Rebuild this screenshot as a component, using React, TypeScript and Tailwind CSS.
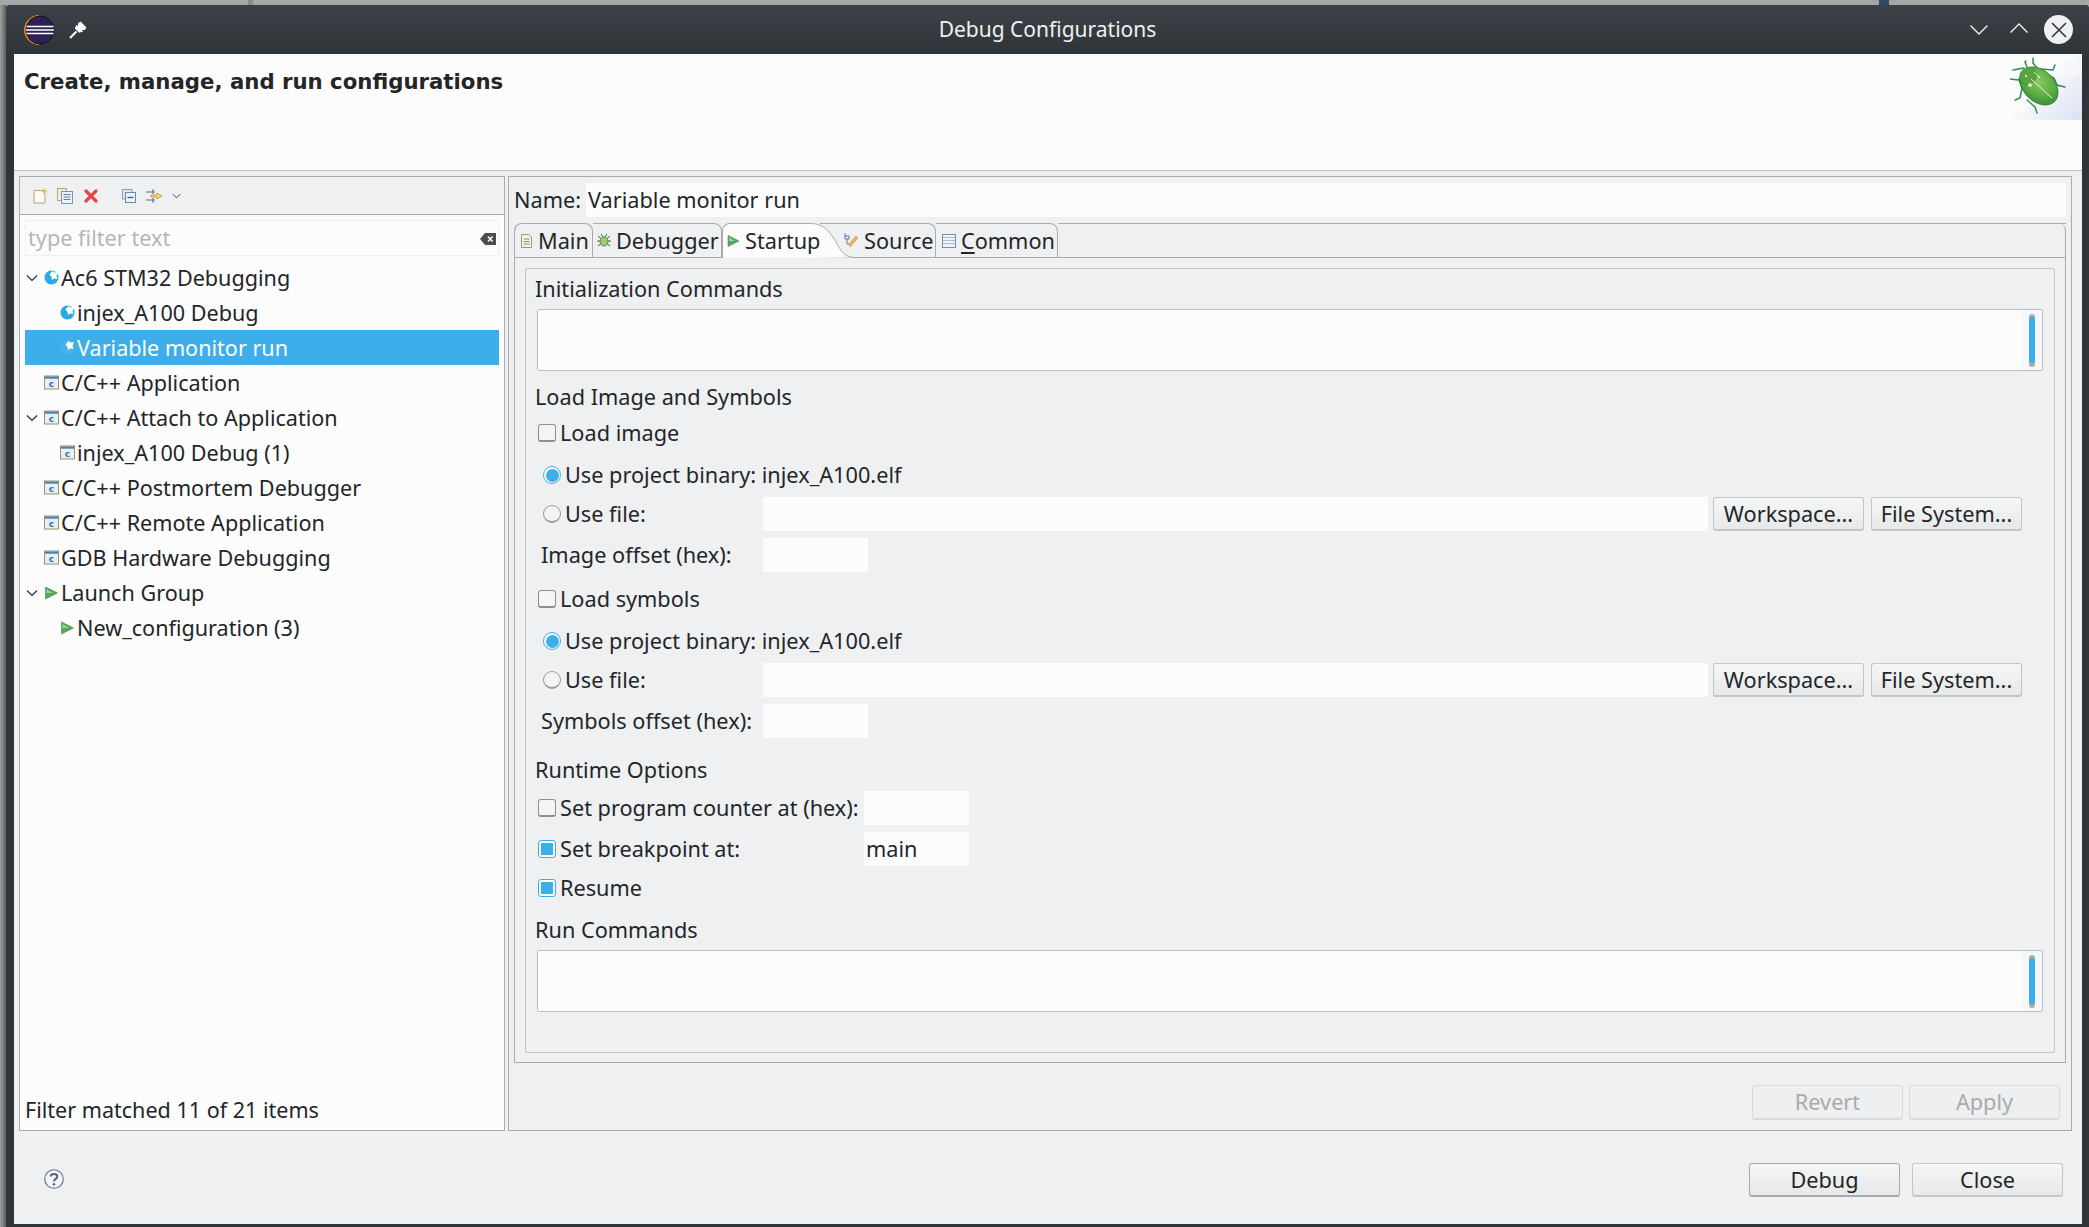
import React from "react";

const Chevron = ({ cls = "w-[12px] h-[8px]" }: { cls?: string }) => (
  <svg viewBox="0 0 12 8" className={cls}><path d="M1 1.5 L6 6.5 L11 1.5" fill="none" stroke="#232629" strokeWidth="1.1" /></svg>
);
const Blue = ({ sel = false }: { sel?: boolean }) => (
  <svg viewBox="0 0 15 15" className="w-[15px] h-[15px] shrink-0">
    <circle cx="7.5" cy="7.5" r="7" fill={sel ? "#46b4ec" : "#29abe2"} />
    <path d="M5.5 4.5 L8.5 1 L10.5 2.5 L14 2 L12.5 6 L13.5 9 L10 8.5 L8 10 L7.5 7 Z" fill="#fff" />
  </svg>
);
const CApp = () => (
  <svg viewBox="0 0 15 15" className="w-[15px] h-[15px] shrink-0">
    <rect x="0.5" y="1" width="14" height="13" fill="#e6f0f8" stroke="#9c9460" />
    <rect x="1" y="1.5" width="13" height="2.2" fill="#4a7fb5" />
    <text x="7.5" y="11.8" textAnchor="middle" fontSize="9" fontWeight="700" fontFamily="DejaVu Sans" fill="#3a6ea5">c</text>
  </svg>
);
const Play = ({ cls = "w-[13px] h-[13px]" }: { cls?: string }) => (
  <svg viewBox="0 0 13 13" className={cls + " shrink-0"}>
    <path d="M1 1 L12 6.5 L1 12 Z" fill="#55a85f" stroke="#3f8f4a" strokeWidth="0.6" />
    <path d="M2 3 L8 6.5 L2 6.5 Z" fill="#9ed4a0" />
  </svg>
);

const Row = ({ level, exp, icon, text, sel }: { level: number; exp?: boolean; icon: React.ReactNode; text: string; sel?: boolean }) => (
  <div className={"h-[35px] flex items-center text-[21.6px] " + (sel ? "bg-[#3daee9] text-[#fcfcfc]" : "")}>
    <div className={level ? "w-[35px] shrink-0" : "w-[19px] shrink-0"}>
      {exp ? <Chevron cls="ml-[1px] w-[12px] h-[8px]" /> : null}
    </div>
    {icon}
    <span className="ml-[2px] leading-none">{text}</span>
  </div>
);

const Btn = ({ t, w = "w-[151px]", h = "h-[34px]", dis, def }: { t: string; w?: string; h?: string; dis?: boolean; def?: boolean }) => (
  <div
    className={
      w + " " + h + " flex items-center justify-center rounded-[3px] border " +
      (dis
        ? "border-[#d9dadb] text-[#a8aaac] bg-[#eeeff0] border-b-[2px]"
        : def
        ? "pt-[1px] border-[#a7a9ab] border-b-[2px] bg-linear-to-b from-[#f5f6f6] to-[#e7e8e9]"
        : "pt-[1px] border-[#c3c5c6] border-b-[2px] bg-linear-to-b from-[#f5f6f6] to-[#e7e8e9]")
    }
  >
    {t}
  </div>
);

const Box = ({ on }: { on?: boolean }) => (
  <div className={"w-[18px] h-[18px] ml-[12px] mr-[4px] rounded-[3px] border shrink-0 flex items-center justify-center " + (on ? "border-[#3daee9] bg-[#fcfcfc]" : "border-[#8d8f91] border-b-[2px] bg-[#f3f4f4]")}>
    {on ? <div className="w-[12px] h-[12px] bg-[#3daee9]" /> : null}
  </div>
);
const Radio = ({ on }: { on?: boolean }) => (
  <div className={"w-[18px] h-[18px] ml-[17px] mr-[4px] rounded-full border shrink-0 flex items-center justify-center " + (on ? "border-[#3daee9] bg-[#fcfcfc]" : "border-[#9a9c9e] border-b-[2px] bg-[#f3f4f4]")}>
    {on ? <div className="w-[13px] h-[13px] rounded-full bg-[#3daee9]" /> : null}
  </div>
);
const Field = ({ w, t }: { w: string; t?: string }) => (
  <div className={w + " h-[34px] bg-[#fcfcfc] flex items-center pl-[2px] shrink-0"}>{t}</div>
);
const Area = ({ mt }: { mt: string }) => (
  <div className={mt + " ml-[11px] w-[1506px] h-[62px] border border-[#bcbec0] rounded-[2px] bg-[#fcfcfc] flex justify-end"}>
    <div className="w-[20px] bg-[#f6f7f7] rounded-r-[2px] flex items-center pl-[7px]">
      <div className="w-[6px] h-[53px] rounded-full bg-[#a9abad] flex items-center">
        <div className="w-[6px] h-[46px] rounded-full bg-[#3daee9]" />
      </div>
    </div>
  </div>
);
const L = ({ mt, children }: { mt: string; children: React.ReactNode }) => (
  <div className={mt + " h-[34px] flex items-center"}>{children}</div>
);

const Tab = ({ w, icon, t, gap }: { w: string; icon: React.ReactNode; t: React.ReactNode; gap: string }) => (
  <div className={w + " h-[34px] flex items-center justify-start border-t border-r border-[#a9abad] rounded-tr-[8px] shrink-0"}>
    <span className={gap + " flex items-center"}>{icon}</span>
    <span className="pt-[2px]">{t}</span>
  </div>
);

export default function App() {
  return (
    <div className="w-[2089px] h-[1227px] overflow-hidden bg-[#a6a6a6] font-['Noto_Sans',sans-serif] text-[21.7px] text-[#232629]">
      <div className="h-[5px] overflow-hidden flex text-[#333]">
        <div className="w-[248px] h-[5px]" />
        <div className="w-[5px] h-[5px] bg-[#8c8c8c]" />
        <div className="w-[15px]" />
        <div className="-mt-[22px] leading-[28px]">100</div>
        <div className="w-[120px]" />
        <div className="-mt-[22px] leading-[28px]">data read</div>
        <div className="flex-1" />
        <div className="w-[10px] h-[5px] mr-[26px] bg-[#2f4b66]" />
        <div className="-mt-[22px] leading-[28px] mr-[88px]">events.u</div>
      </div>
      <div className="h-[1222px] flex">
        <div className="w-[6px] shrink-0 bg-linear-to-r from-[#a0a0a0] to-[#5f5f5f]" />
        <div className="flex-1 flex flex-col bg-[#2f3438] rounded-t-[4px] pb-[3px] min-w-0">
          {/* title bar */}
          <div className="h-[49px] shrink-0 grid grid-cols-[1fr_auto_1fr] items-center rounded-t-[4px] bg-linear-to-b from-[#3d4249] to-[#2f3438]">
            <div className="flex items-center pl-[16px]">
              <svg viewBox="0 0 34 32" className="w-[34px] h-[32px]">
                <path d="M17 1.5 A14.5 14.5 0 0 0 17 30.5 A16 15 0 0 1 17 1.5 Z" fill="#f28c1e" stroke="#f28c1e" />
                <circle cx="18" cy="16" r="14" fill="#2c2255" stroke="#15121f" />
                <path d="M4.5 12.5 H31.5 M4 16 H32 M4.5 19.5 H31.5" stroke="#fff" strokeWidth="1.7" />
              </svg>
              <svg viewBox="0 0 18 18" className="ml-[13px] w-[19px] h-[19px]">
                <path d="M8.5 3 L11 1.5 L16.5 7 L15 9.5 L11.5 9.5 L8.5 6.5 Z" fill="#fcfcfc" />
                <path d="M7 4.5 L13.5 11 L9.5 12 L5.5 8 Z" fill="#fcfcfc" />
                <path d="M7 11 L1 17" stroke="#fcfcfc" strokeWidth="2" />
              </svg>
            </div>
            <div className="text-[21px] text-[#eff0f1]">Debug Configurations</div>
            <div className="flex items-center justify-end pr-[16px]">
              <svg viewBox="0 0 20 12" className="w-[20px] h-[12px]"><path d="M1.5 1.5 L10 10 L18.5 1.5" fill="none" stroke="#eff0f1" strokeWidth="1.4" /></svg>
              <svg viewBox="0 0 20 12" className="ml-[20px] -mt-[3px] w-[20px] h-[12px]"><path d="M1.5 10.5 L10 2 L18.5 10.5" fill="none" stroke="#eff0f1" strokeWidth="1.4" /></svg>
              <div className="ml-[15px] w-[29px] h-[29px] rounded-full bg-[#eff0f1] flex items-center justify-center">
                <svg viewBox="0 0 16 16" className="w-[16px] h-[16px]"><path d="M1 1 L15 15 M15 1 L1 15" stroke="#31363b" strokeWidth="1.6" /></svg>
              </div>
            </div>
          </div>
          {/* content */}
          <div className="flex-1 ml-[8px] mr-[7px] bg-[#eff0f1] flex flex-col min-h-0">
            <div className="h-[117px] shrink-0 bg-[#fcfcfc] border-b border-[#bdbfc1] flex justify-between items-start">
              <div className="ml-[10px] mt-[13px] font-['DejaVu_Sans',sans-serif] font-bold text-[21.25px] leading-[30px]">Create, manage, and run configurations</div>
              <svg viewBox="0 0 72 66" className="w-[72px] h-[66px]">
                <defs>
                  <linearGradient id="hg" x1="0" y1="0" x2="1" y2="0.9"><stop offset="0.45" stopColor="#fcfcfc" /><stop offset="1" stopColor="#dce2f5" /></linearGradient>
                  <radialGradient id="bg" cx="0.4" cy="0.4" r="0.7"><stop offset="0" stopColor="#8acb5e" /><stop offset="0.6" stopColor="#5cab40" /><stop offset="1" stopColor="#2f8a3a" /></radialGradient>
                </defs>
                <rect x="0" y="0" width="72" height="66" fill="url(#hg)" />
                <path d="M40 22 C52 22 62 22 72 22 L72 0 C60 4 50 12 40 22 Z" fill="#f6f7fc" opacity="0.8" />
                <g fill="none" stroke="#2e8a55" strokeWidth="1.5" strokeLinecap="round">
                  <path d="M14 14 L3 16" />
                  <path d="M17 13 L15 8 L16 7" />
                  <path d="M27 14 L23 9 L23 4" />
                  <path d="M30 15 L43 16 L45 11" />
                  <path d="M38 21 L44 24 L47 31 L55 33" />
                  <path d="M10 24 L8 26 L0 25" />
                  <path d="M9 26 L12 34 L10 44 L5 46" />
                  <path d="M17 46 L25 53 L27 59" />
                </g>
                <ellipse cx="29" cy="32" rx="22" ry="15.5" transform="rotate(45 29 32)" fill="url(#bg)" stroke="#2d7a38" strokeWidth="0.8" />
                <ellipse cx="18" cy="22" rx="8" ry="9" transform="rotate(45 18 22)" fill="#58a443" stroke="#2d7a38" strokeWidth="0.5" />
                <path d="M21 25 L42 44 M24 18 L30 24" stroke="#e5f2dc" strokeWidth="1" />
                <circle cx="20" cy="31" r="2" fill="#e5f2dc" opacity="0.9" />
                <circle cx="16" cy="22" r="1.2" fill="#e5f2dc" opacity="0.8" />
                <circle cx="29" cy="23" r="1" fill="#e5f2dc" opacity="0.7" />
              </svg>
            </div>
            <div className="flex-1 min-h-0 flex pt-[5px] pl-[5px]">
              {/* left panel */}
              <div className="w-[486px] h-[955px] border border-[#a9abad] bg-[#fcfcfc] flex flex-col shrink-0">
                <div className="h-[38px] shrink-0 bg-[#eff0f1] border-b border-[#a9abad] flex items-center pl-[13px]">
                  <svg viewBox="0 0 15 16" className="w-[15px] h-[16px]">
                    <path d="M1 2.5 H9 L12 5.5 V15 H1 Z" fill="#fdfbf0" stroke="#b0a67c" />
                    <path d="M11 0.5 V6 M8.5 3 H14" stroke="#e5b84c" strokeWidth="1.4" />
                  </svg>
                  <svg viewBox="0 0 16 16" className="ml-[9px] w-[16px] h-[16px]">
                    <rect x="0.5" y="0.5" width="9" height="12" fill="#f3eed6" stroke="#b0a67c" />
                    <rect x="4.5" y="3.5" width="11" height="12" fill="#eef3f9" stroke="#7e94ad" />
                    <path d="M6.5 6.5 H13.5 M6.5 9 H13.5 M6.5 11.5 H13.5" stroke="#5b7fa6" />
                  </svg>
                  <svg viewBox="0 0 14 14" className="ml-[11px] w-[14px] h-[14px]">
                    <path d="M2 2 L12 12 M12 2 L2 12" stroke="#e2454c" strokeWidth="3.2" strokeLinecap="round" />
                  </svg>
                  <svg viewBox="0 0 14 14" className="ml-[24px] w-[14px] h-[14px]">
                    <rect x="0.5" y="0.5" width="9.5" height="9.5" fill="#dfe8f2" stroke="#8aa0b8" />
                    <rect x="3.5" y="3.5" width="10" height="10" fill="#eef3f9" stroke="#6f8aa6" />
                    <path d="M5.5 8.5 H11.5" stroke="#2f5f8f" strokeWidth="1.3" />
                  </svg>
                  <svg viewBox="0 0 17 16" className="ml-[10px] w-[17px] h-[16px]">
                    <path d="M0 4 H9 M0 12 H9 M7 1 V6 M7 10 V15" stroke="#4a6e8f" />
                    <path d="M5 7 H11 V5 L16 8 L11 11 V9 H5 Z" fill="#f4d98a" stroke="#c9901e" strokeWidth="0.8" />
                  </svg>
                  <Chevron cls="ml-[9px] w-[9px] h-[6px]" />
                </div>
                <div className="mt-[5px] mx-[5px] h-[36px] shrink-0 border border-[#eeeff0] flex items-center justify-between pl-[2px] pr-[2px] pt-[1px] text-[#b4b6b8]">
                  <span>type filter text</span>
                  <svg viewBox="0 0 16 12" className="w-[16px] h-[12px]">
                    <path d="M5 0 H16 V12 H5 L0 6 Z" fill="#4d4d4d" />
                    <path d="M8 3.5 L12.5 8.5 M12.5 3.5 L8 8.5" stroke="#fff" strokeWidth="1.5" />
                  </svg>
                </div>
                <div className="mt-[4px] mx-[5px] flex-1">
                  <Row level={0} exp icon={<Blue />} text="Ac6 STM32 Debugging" />
                  <Row level={1} icon={<Blue />} text="injex_A100 Debug" />
                  <Row level={1} sel icon={<Blue sel />} text="Variable monitor run" />
                  <Row level={0} icon={<CApp />} text="C/C++ Application" />
                  <Row level={0} exp icon={<CApp />} text="C/C++ Attach to Application" />
                  <Row level={1} icon={<CApp />} text="injex_A100 Debug (1)" />
                  <Row level={0} icon={<CApp />} text="C/C++ Postmortem Debugger" />
                  <Row level={0} icon={<CApp />} text="C/C++ Remote Application" />
                  <Row level={0} icon={<CApp />} text="GDB Hardware Debugging" />
                  <Row level={0} exp icon={<Play cls="w-[15px] h-[14px]" />} text="Launch Group" />
                  <Row level={1} icon={<Play cls="w-[15px] h-[14px]" />} text="New_configuration (3)" />
                </div>
                <div className="h-[34px] mb-[3px] ml-[5px] flex items-center shrink-0 pt-[1px] text-[21.55px]">Filter matched 11 of 21 items</div>
              </div>
              {/* right panel */}
              <div className="ml-[3px] w-[1564px] h-[955px] border border-[#a9abad] flex flex-col shrink-0 pl-[5px] pr-[5px]">
                <div className="mt-[6px] h-[34px] flex items-center shrink-0">
                  <span className="w-[72px] shrink-0">Name:</span>
                  <div className="flex-1 h-[34px] bg-[#fcfcfc] flex items-center pl-[2px]">Variable monitor run</div>
                </div>
                <div className="mt-[6px] h-[840px] w-[1552px] shrink-0 border border-[#a9abad] border-t-0 rounded-t-[8px] flex flex-col">
                  <div className="h-[34px] flex shrink-0 -ml-[1px] -mr-[1px]">
                    <Tab w="w-[79px] border-l border-l-[#a9abad] rounded-tl-[8px]" gap="ml-[6px] mr-[6px]" icon={
                      <svg viewBox="0 0 11 14" className="w-[11px] h-[14px]"><path d="M0.5 0.5 H8 L10.5 3 V13.5 H0.5 Z" fill="#f9f4dc" stroke="#a39a6c" /><path d="M2.5 5 H8.5 M2.5 7.5 H8.5 M2.5 10 H8.5" stroke="#6f8fb5" /></svg>
                    } t="Main" />
                    <Tab w="w-[129px]" gap="ml-[4px] mr-[5px]" icon={
                      <svg viewBox="0 0 14 14" className="w-[14px] h-[14px]"><path d="M1 2 L13 12 M13 2 L1 12 M0 7 H14 M4 0 L6 3 M10 0 L8 3" stroke="#2e6b3c" strokeWidth="1" /><ellipse cx="7" cy="7.5" rx="4" ry="4.5" fill="#a8c86a" stroke="#2e6b3c" strokeWidth="0.7" /></svg>
                    } t="Debugger" />
                    <div className="relative z-20 -mb-[1px] w-[88px] h-[35px] bg-[#fcfcfc] rounded-tl-[8px] flex items-center pl-[4px] shrink-0 border-t border-l border-[#a9abad]">
                      <Play cls="w-[13px] h-[14px]" />
                      <span className="ml-[5px] pt-[1px] whitespace-nowrap">Startup</span>
                    </div>
                    <svg viewBox="0 0 44 35" preserveAspectRatio="none" className="relative z-10 -mb-[1px] w-[44px] h-[35px] shrink-0">
                      <path d="M0 0.5 C10 0.5 16 4 23 14 C29 24 33 34.5 44 34.5 L0 35 Z" fill="#fcfcfc" />
                      <path d="M0 0.5 C10 0.5 16 4 23 14 C29 24 33 34.5 44 34.5" fill="none" stroke="#a9abad" />
                    </svg>
                    <div className="-ml-[34px] w-[116px] h-[34px] flex items-center border-t border-r border-[#a9abad] rounded-tr-[8px] pl-[24px] shrink-0">
                      <svg viewBox="0 0 14 15" className="relative z-20 w-[14px] h-[15px] shrink-0"><path d="M1 0 V3 M1 3 H5 V6 H1 V3 M3 6 V11 H6" stroke="#4a7fb5" fill="none" /><path d="M6 14 L5 11 L12 3 L14 5 L7 13 Z" fill="#f0b060" stroke="#d08a30" strokeWidth="0.5" /></svg>
                      <span className="relative z-20 ml-[6px] pt-[2px]">Source</span>
                    </div>
                    <Tab w="w-[122px]" gap="ml-[6px] mr-[5px]" icon={
                      <svg viewBox="0 0 14 14" className="w-[14px] h-[14px]"><rect x="0.5" y="0.5" width="13" height="13" fill="#eef3f9" stroke="#7c8ea5" /><path d="M1 3.5 H13 M1 6.5 H13 M1 9.5 H13" stroke="#a8bbd0" /></svg>
                    } t={<><span className="underline underline-offset-[3px]">C</span>ommon</>} />
                    <div className="flex-1 border-t border-[#a9abad]" />
                  </div>
                  <div className="flex-1 border-t border-[#a9abad] pl-[10px] pt-[10px] flex min-h-0">
                    <div className="w-[1530px] h-[785px] border border-[#c2c4c6] rounded-[2px] pt-[3px] shrink-0">
                      <L mt="mt-0"><span className="ml-[9px]">Initialization Commands</span></L>
                      <Area mt="mt-[3px]" />
                      <L mt="mt-[9px]"><span className="ml-[9px]">Load Image and Symbols</span></L>
                      <L mt="mt-[2px]"><Box /><span>Load image</span></L>
                      <L mt="mt-[8px]"><Radio on /><span>Use project binary: injex_A100.elf</span></L>
                      <L mt="mt-[5px]"><Radio /><span className="w-[198px] shrink-0">Use file:</span><Field w="w-[945px]" /><div className="ml-[5px]"><Btn t="Workspace..." /></div><div className="ml-[7px]"><Btn t="File System..." /></div></L>
                      <L mt="mt-[7px]"><span className="ml-[15px] w-[222px] shrink-0">Image offset (hex):</span><Field w="w-[105px]" /></L>
                      <L mt="mt-[10px]"><Box /><span>Load symbols</span></L>
                      <L mt="mt-[8px]"><Radio on /><span>Use project binary: injex_A100.elf</span></L>
                      <L mt="mt-[5px]"><Radio /><span className="w-[198px] shrink-0">Use file:</span><Field w="w-[945px]" /><div className="ml-[5px]"><Btn t="Workspace..." /></div><div className="ml-[7px]"><Btn t="File System..." /></div></L>
                      <L mt="mt-[7px]"><span className="ml-[15px] w-[222px] shrink-0">Symbols offset (hex):</span><Field w="w-[105px]" /></L>
                      <L mt="mt-[15px]"><span className="ml-[9px]">Runtime Options</span></L>
                      <L mt="mt-[4px]"><Box /><span className="w-[304px] shrink-0">Set program counter at (hex):</span><Field w="w-[105px]" /></L>
                      <L mt="mt-[7px]"><Box on /><span className="w-[304px] shrink-0">Set breakpoint at:</span><Field w="w-[105px]" t="main" /></L>
                      <L mt="mt-[5px]"><Box on /><span>Resume</span></L>
                      <L mt="mt-[8px]"><span className="ml-[9px]">Run Commands</span></L>
                      <Area mt="mt-[3px]" />
                    </div>
                  </div>
                </div>
                <div className="mt-[22px] flex justify-end pr-[6px]">
                  <Btn t="Revert" dis h="h-[35px]" />
                  <div className="ml-[6px]"><Btn t="Apply" dis h="h-[35px]" /></div>
                </div>
              </div>
            </div>
            <div className="h-[93px] shrink-0 flex items-start justify-between pt-[32px] pl-[30px] pr-[19px]">
              <svg viewBox="0 0 20 20" className="mt-[6px] w-[20px] h-[20px]">
                <circle cx="10" cy="10" r="9.3" fill="#f4f5f6" stroke="#5d7290" strokeWidth="1.1" />
                <path d="M6.7 7.6 C6.7 4 13.3 4 13.3 7.6 C13.3 10 10 9.8 10 12.4" fill="none" stroke="#4e6484" strokeWidth="2" />
                <circle cx="10" cy="15.2" r="1.2" fill="#4e6484" />
              </svg>
              <div className="flex">
                <Btn t="Debug" def />
                <div className="ml-[12px]"><Btn t="Close" /></div>
              </div>
            </div>
          </div>
        </div>
      </div>
    </div>
  );
}
